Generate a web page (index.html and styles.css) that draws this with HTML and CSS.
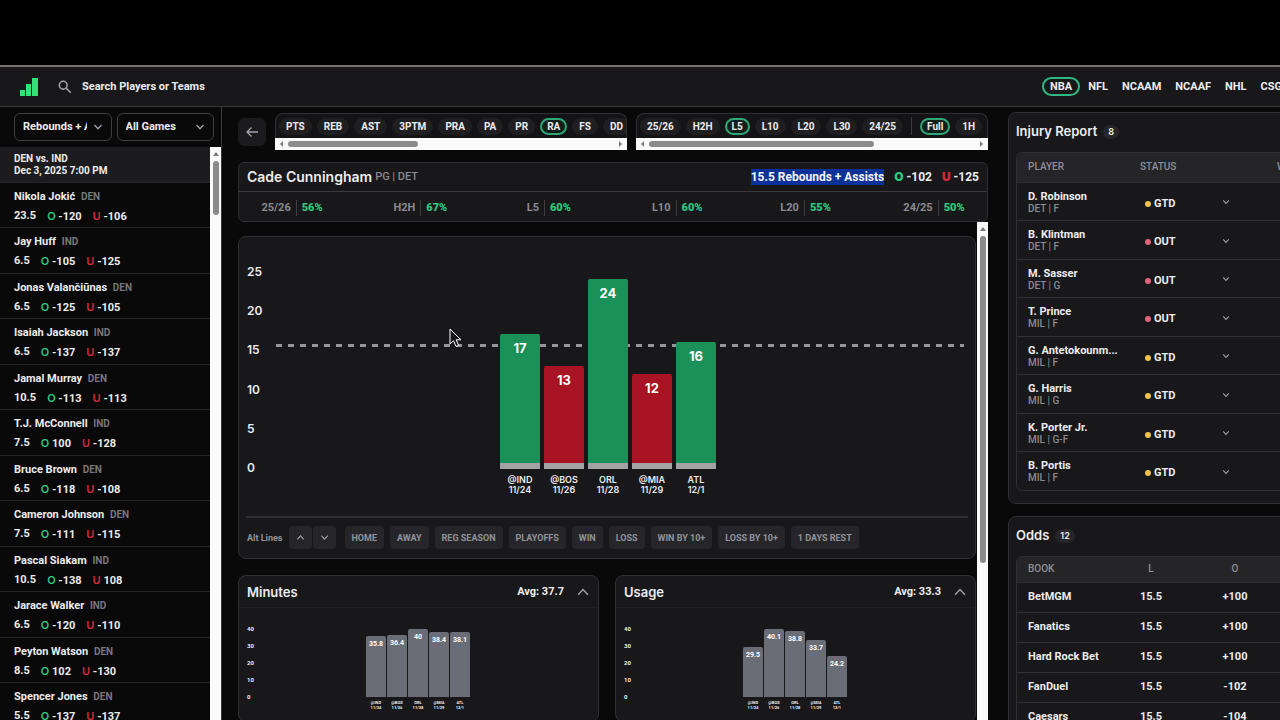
FILE: index.html
```
<!DOCTYPE html>
<html lang="en">

<head>
    <meta charset="UTF-8">
    <meta name="viewport" content="width=device-width, initial-scale=1.0">
    <title>Cade Cunningham - Rebounds + Assists</title>
    <link rel="stylesheet" href="styles.css">
</head>

<body>
    <!-- shared icons -->
    <svg class="defs" width="0" height="0">
        <symbol id="down" viewBox="0 0 10 10"><path d="M1.5 3 5 6.8 8.5 3" /></symbol>
        <symbol id="up" viewBox="0 0 10 10"><path d="M1.5 7 5 3.2 8.5 7" /></symbol>
    </svg>

    <header class="topbar">
        <a class="logo" href="#" aria-label="Home">
            <svg width="18" height="18" viewBox="0 0 18 18"><path d="M0 12h5v6H0zM6 6h5v12H6zM12 0h6v18h-6z" /></svg>
        </a>
        <label class="search">
            <svg width="14" height="14" viewBox="0 0 14 14"><circle cx="5.2" cy="5.2" r="3.9" /><path d="m8.2 8.2 4.6 4.6" /></svg>
            <input type="text" placeholder="Search Players or Teams" aria-label="Search Players or Teams">
        </label>
        <nav class="leagues">
            <a class="active" href="#">NBA</a>
            <a href="#">NFL</a>
            <a href="#">NCAAM</a>
            <a href="#">NCAAF</a>
            <a href="#">NHL</a>
            <a href="#">CSGO</a>
        </nav>
    </header>

    <div class="layout">
        <aside class="sidebar">
            <div class="selects">
                <div class="select">
                    <select aria-label="Prop"><option>Rebounds + Assists</option></select>
                    <svg width="10" height="10"><use href="#down" /></svg>
                </div>
                <div class="select">
                    <select aria-label="Games"><option>All Games</option></select>
                    <svg width="10" height="10"><use href="#down" /></svg>
                </div>
            </div>
            <div class="scroller">
                <div class="list">
                    <div class="game">DEN vs. IND<br>Dec 3, 2025 7:00 PM</div>
                    <ul>
                        <li><p>Nikola Jokić <i>DEN</i></p><p class="line">23.5 <span><b class="o">O</b> -120</span> <span><b class="u">U</b> -106</span></p></li>
                        <li><p>Jay Huff <i>IND</i></p><p class="line">6.5 <span><b class="o">O</b> -105</span> <span><b class="u">U</b> -125</span></p></li>
                        <li><p>Jonas Valančiūnas <i>DEN</i></p><p class="line">6.5 <span><b class="o">O</b> -125</span> <span><b class="u">U</b> -105</span></p></li>
                        <li><p>Isaiah Jackson <i>IND</i></p><p class="line">6.5 <span><b class="o">O</b> -137</span> <span><b class="u">U</b> -137</span></p></li>
                        <li><p>Jamal Murray <i>DEN</i></p><p class="line">10.5 <span><b class="o">O</b> -113</span> <span><b class="u">U</b> -113</span></p></li>
                        <li><p>T.J. McConnell <i>IND</i></p><p class="line">7.5 <span><b class="o">O</b> 100</span> <span><b class="u">U</b> -128</span></p></li>
                        <li><p>Bruce Brown <i>DEN</i></p><p class="line">6.5 <span><b class="o">O</b> -118</span> <span><b class="u">U</b> -108</span></p></li>
                        <li><p>Cameron Johnson <i>DEN</i></p><p class="line">7.5 <span><b class="o">O</b> -111</span> <span><b class="u">U</b> -115</span></p></li>
                        <li><p>Pascal Siakam <i>IND</i></p><p class="line">10.5 <span><b class="o">O</b> -138</span> <span><b class="u">U</b> 108</span></p></li>
                        <li><p>Jarace Walker <i>IND</i></p><p class="line">6.5 <span><b class="o">O</b> -120</span> <span><b class="u">U</b> -110</span></p></li>
                        <li><p>Peyton Watson <i>DEN</i></p><p class="line">8.5 <span><b class="o">O</b> 102</span> <span><b class="u">U</b> -130</span></p></li>
                        <li><p>Spencer Jones <i>DEN</i></p><p class="line">5.5 <span><b class="o">O</b> -137</span> <span><b class="u">U</b> -137</span></p></li>
                    </ul>
                </div>
                <div class="vbar"><span class="arrow-up"></span><span class="thumb short"></span></div>
            </div>
        </aside>

        <main class="center">
            <div class="filters">
                <button class="back" aria-label="Back">
                    <svg width="14" height="14" viewBox="0 0 14 14"><path d="M13 7H2M6.5 2.5 2 7l4.500 4.500" /></svg>
                </button>
                <div class="pillbox">
                    <div class="pills">
                        <button>PTS</button>
                        <button>REB</button>
                        <button>AST</button>
                        <button>3PTM</button>
                        <button>PRA</button>
                        <button>PA</button>
                        <button>PR</button>
                        <button class="active">RA</button>
                        <button>FS</button>
                        <button>DD</button>
                    </div>
                    <div class="hbar"><span class="arrow-left"></span><span class="track"><span class="thumb"></span></span><span class="arrow-right"></span></div>
                </div>
                <div class="pillbox">
                    <div class="pills">
                        <button>25/26</button>
                        <button>H2H</button>
                        <button class="active">L5</button>
                        <button>L10</button>
                        <button>L20</button>
                        <button>L30</button>
                        <button>24/25</button>
                        <span class="sep"></span>
                        <button class="active">Full</button>
                        <button>1H</button>
                    </div>
                    <div class="hbar"><span class="arrow-left"></span><span class="track"><span class="thumb long"></span></span><span class="arrow-right"></span></div>
                </div>
            </div>

            <section class="player">
                <div class="player-top">
                    <h1>Cade Cunningham</h1>
                    <span class="team">PG | DET</span>
                    <mark>15.5 Rebounds + Assists</mark>
                    <span class="price"><b class="o">O</b> -102</span>
                    <span class="price"><b class="u">U</b> -125</span>
                </div>
                <div class="rates">
                    <div>25/26<b>56%</b></div>
                    <div>H2H<b>67%</b></div>
                    <div>L5<b>60%</b></div>
                    <div>L10<b>60%</b></div>
                    <div>L20<b>55%</b></div>
                    <div>24/25<b>50%</b></div>
                </div>
            </section>

            <div class="scroller">
                <div class="content">
                    <section class="card main-card">
                        <div class="chart big">
                            <div class="axis"><span>25</span><span>20</span><span>15</span><span>10</span><span>5</span><span>0</span></div>
                            <div class="plot">
                                <div class="prop-line" style="bottom: 61.5%"></div>
                                <div class="col"><div class="bar win" style="height: 68%">17</div><p>@IND<br>11/24</p></div>
                                <div class="col"><div class="bar lose" style="height: 52%">13</div><p>@BOS<br>11/26</p></div>
                                <div class="col"><div class="bar win" style="height: 96%">24</div><p>ORL<br>11/28</p></div>
                                <div class="col"><div class="bar lose" style="height: 48%">12</div><p>@MIA<br>11/29</p></div>
                                <div class="col"><div class="bar win" style="height: 64%">16</div><p>ATL<br>12/1</p></div>
                            </div>
                        </div>
                        <div class="tags">
                            <span>Alt Lines</span>
                            <div class="steps">
                                <button aria-label="Line up"><svg width="9" height="9"><use href="#up" /></svg></button>
                                <button aria-label="Line down"><svg width="9" height="9"><use href="#down" /></svg></button>
                            </div>
                            <button>HOME</button>
                            <button>AWAY</button>
                            <button>REG SEASON</button>
                            <button>PLAYOFFS</button>
                            <button>WIN</button>
                            <button>LOSS</button>
                            <button>WIN BY 10+</button>
                            <button>LOSS BY 10+</button>
                            <button>1 DAYS REST</button>
                        </div>
                    </section>

                    <div class="pair">
                        <section class="card">
                            <div class="card-head">
                                <h2>Minutes</h2>
                                <span>Avg: 37.7</span>
                                <button aria-label="Collapse"><svg width="14" height="14"><use href="#up" /></svg></button>
                            </div>
                            <div class="chart small">
                                <div class="axis"><span>40</span><span>30</span><span>20</span><span>10</span><span>0</span></div>
                                <div class="plot">
                                    <div class="col"><div class="bar" style="height: 89.5%">35.8</div><p>@IND<br>11/24</p></div>
                                    <div class="col"><div class="bar" style="height: 91%">36.4</div><p>@BOS<br>11/26</p></div>
                                    <div class="col"><div class="bar" style="height: 100%">40</div><p>ORL<br>11/28</p></div>
                                    <div class="col"><div class="bar" style="height: 96%">38.4</div><p>@MIA<br>11/29</p></div>
                                    <div class="col"><div class="bar" style="height: 95.2%">38.1</div><p>ATL<br>12/1</p></div>
                                </div>
                            </div>
                        </section>
                        <section class="card">
                            <div class="card-head">
                                <h2>Usage</h2>
                                <span>Avg: 33.3</span>
                                <button aria-label="Collapse"><svg width="14" height="14"><use href="#up" /></svg></button>
                            </div>
                            <div class="chart small">
                                <div class="axis"><span>40</span><span>30</span><span>20</span><span>10</span><span>0</span></div>
                                <div class="plot">
                                    <div class="col"><div class="bar" style="height: 73.8%">29.5</div><p>@IND<br>11/24</p></div>
                                    <div class="col"><div class="bar" style="height: 100.2%">40.1</div><p>@BOS<br>11/26</p></div>
                                    <div class="col"><div class="bar" style="height: 97%">38.8</div><p>ORL<br>11/28</p></div>
                                    <div class="col"><div class="bar" style="height: 84.2%">33.7</div><p>@MIA<br>11/29</p></div>
                                    <div class="col"><div class="bar" style="height: 60.5%">24.2</div><p>ATL<br>12/1</p></div>
                                </div>
                            </div>
                        </section>
                    </div>
                </div>
                <div class="vbar"><span class="arrow-up"></span><span class="thumb tall"></span></div>
            </div>
        </main>

        <aside class="right">
            <section class="panel">
                <h2>Injury Report <span class="count">8</span></h2>
                <div class="table-wrap">
                    <table class="injuries">
                        <thead><tr><th>PLAYER</th><th>STATUS</th><th></th><th>WITHOUT</th></tr></thead>
                        <tbody>
                            <tr><td>D. Robinson<small>DET | F</small></td><td><i class="dot gtd"></i>GTD</td><td><svg width="8" height="8"><use href="#down" /></svg></td><td></td></tr>
                            <tr><td>B. Klintman<small>DET | F</small></td><td><i class="dot out"></i>OUT</td><td><svg width="8" height="8"><use href="#down" /></svg></td><td></td></tr>
                            <tr><td>M. Sasser<small>DET | G</small></td><td><i class="dot out"></i>OUT</td><td><svg width="8" height="8"><use href="#down" /></svg></td><td></td></tr>
                            <tr><td>T. Prince<small>MIL | F</small></td><td><i class="dot out"></i>OUT</td><td><svg width="8" height="8"><use href="#down" /></svg></td><td></td></tr>
                            <tr><td>G. Antetokounm...<small>MIL | F</small></td><td><i class="dot gtd"></i>GTD</td><td><svg width="8" height="8"><use href="#down" /></svg></td><td></td></tr>
                            <tr><td>G. Harris<small>MIL | G</small></td><td><i class="dot gtd"></i>GTD</td><td><svg width="8" height="8"><use href="#down" /></svg></td><td></td></tr>
                            <tr><td>K. Porter Jr.<small>MIL | G-F</small></td><td><i class="dot gtd"></i>GTD</td><td><svg width="8" height="8"><use href="#down" /></svg></td><td></td></tr>
                            <tr><td>B. Portis<small>MIL | F</small></td><td><i class="dot gtd"></i>GTD</td><td><svg width="8" height="8"><use href="#down" /></svg></td><td></td></tr>
                        </tbody>
                    </table>
                </div>
            </section>

            <section class="panel">
                <h2>Odds <span class="count">12</span></h2>
                <div class="table-wrap">
                    <table class="odds">
                        <thead><tr><th>BOOK</th><th>L</th><th>O</th><th>U</th></tr></thead>
                        <tbody>
                            <tr><td>BetMGM</td><td>15.5</td><td>+100</td><td></td></tr>
                            <tr><td>Fanatics</td><td>15.5</td><td>+100</td><td></td></tr>
                            <tr><td>Hard Rock Bet</td><td>15.5</td><td>+100</td><td></td></tr>
                            <tr><td>FanDuel</td><td>15.5</td><td>-102</td><td></td></tr>
                            <tr><td>Caesars</td><td>15.5</td><td>-104</td><td></td></tr>
                        </tbody>
                    </table>
                </div>
            </section>
        </aside>
    </div>

    <svg class="cursor" width="14" height="20" viewBox="0 0 14 20"><path d="M1 1v15l3.500-3.200 2.600 5.700 2.600-1.200-2.600-5.500H12z" /></svg>
</body>

</html>
```
FILE: styles.css
```
* {
    margin: 0;
    padding: 0;
    box-sizing: border-box;
}

body {
    height: 100vh;
    padding-top: 65px;
    display: flex;
    flex-direction: column;
    overflow: hidden;
    background: #000;
    color: #ececee;
    font: 700 11px/16px Roboto, "Liberation Sans", sans-serif;
}

ul {
    list-style: none;
}

a {
    color: inherit;
    text-decoration: none;
}

button,
input,
select {
    font: inherit;
    color: inherit;
    background: none;
    border: 0;
    outline: 0;
}

button {
    cursor: pointer;
}

svg {
    display: block;
    fill: none;
    stroke: #a1a1aa;
    stroke-width: 1.3;
}

i {
    font-style: normal;
}

h1,
h2,
.o,
.u,
.big {
    font-family: Inter, "Liberation Sans", sans-serif;
}

.defs {
    position: absolute;
}

.o {
    color: #2fc77f;
}

.u {
    color: #cf2a40;
}

/* top bar */
.topbar {
    flex: none;
    display: flex;
    align-items: center;
    height: 42px;
    padding-left: 20px;
    background: #18181b;
    border-top: 2px solid #77736f;
    border-bottom: 1px solid #3a3a3d;
}

.logo svg {
    fill: #34e27a;
    stroke: none;
}

.search {
    flex: 1;
    display: flex;
    align-items: center;
    gap: 10px;
    margin-left: 20px;
}

.search svg {
    stroke-width: 1.6;
}

.search input {
    flex: 1;
}

.search input::placeholder {
    color: #ececee;
}

.leagues {
    flex: none;
    display: flex;
    align-items: center;
    gap: 14px;
    width: 238px;
    overflow: hidden;
}

.leagues .active {
    padding: 0 6px;
    margin-right: -6px;
    border: 2px solid #2fb982;
    border-radius: 10px;
    line-height: 15px;
}

/* three columns */
.layout {
    flex: 1;
    min-height: 0;
    display: grid;
    grid-template-columns: 222px minmax(0, 1fr) 272px;
    background: #09090a;
}

.sidebar,
.center {
    display: flex;
    flex-direction: column;
    min-height: 0;
}

.sidebar {
    border-right: 1px solid #3a3a3d;
}

.selects {
    display: flex;
    gap: 5px;
    padding: 6px 7px 6px 14px;
}

.select {
    flex: 1;
    min-width: 0;
    display: grid;
    align-items: center;
    height: 28px;
    border: 1px solid #3f3f43;
    border-radius: 6px;
}

.select select,
.select svg {
    grid-area: 1 / 1;
}

.select select {
    appearance: none;
    width: 100%;
    padding: 0 24px 0 8px;
}

.select svg {
    justify-self: end;
    margin-right: 8px;
    pointer-events: none;
}

.scroller {
    flex: 1;
    min-height: 0;
    display: flex;
}

.list {
    flex: 1;
    overflow: hidden;
}

.game {
    padding: 6px 14px 5px;
    background: #1c1c1e;
    font-size: 10px;
    line-height: 12px;
}

.list li {
    padding: 6px 14px 4px;
    border-top: 1px solid #26262a;
}

.list li:nth-child(odd) {
    padding-bottom: 3px;
}

.list i {
    margin-left: 3px;
    color: #77777d;
    font-size: 10px;
}

.line {
    display: flex;
    align-items: center;
    gap: 11px;
    height: 16px;
    margin-top: 3px;
}

.line b {
    font-weight: 600;
}

/* scrollbars */
.vbar {
    flex: none;
    display: flex;
    flex-direction: column;
    align-items: center;
    gap: 5px;
    width: 11px;
    padding-top: 5px;
    background: #fafafa;
}

.hbar {
    display: flex;
    align-items: center;
    gap: 5px;
    height: 12px;
    padding: 0 5px;
    background: #fafafa;
}

.track {
    flex: 1;
}

.thumb {
    display: block;
    border-radius: 3px;
    background: #8b8b8b;
}

.vbar .thumb {
    width: 6px;
}

.hbar .thumb {
    width: 40%;
    height: 6px;
}

.hbar .long {
    width: 69%;
}

.short {
    height: 54px;
}

.tall {
    height: 327px;
}

.arrow-up,
.arrow-left,
.arrow-right {
    border: 3px solid transparent;
}

.arrow-up {
    border-top: 0;
    border-bottom: 4px solid #7a7a7a;
}

.arrow-left {
    border-left: 0;
    border-right-color: #7a7a7a;
}

.arrow-right {
    border-right: 0;
    border-left-color: #7a7a7a;
}

/* center */
.center {
    padding: 6px 20px 0 16px;
}

.filters {
    display: flex;
    gap: 9px;
    font-size: 10px;
}

.back {
    flex: none;
    align-self: center;
    display: grid;
    place-items: center;
    width: 28px;
    height: 28px;
    border-radius: 6px;
    background: #1b1b1d;
}

.pillbox {
    flex: 1;
    min-width: 0;
}

.pills {
    display: flex;
    align-items: center;
    gap: 5px;
    height: 25px;
    padding: 0 3px;
    overflow: hidden;
    background: #141416;
    border: 1px solid #303033;
    border-bottom: 0;
    border-radius: 8px 8px 0 0;
}

.pills button {
    flex: none;
    height: 17px;
    padding: 0 7px;
    border-radius: 9px;
    background: #1f1f22;
    line-height: 17px;
}

.pills .active {
    padding: 0 5px;
    border: 2px solid #2fa676;
    background: #12201b;
    line-height: 13px;
}

.sep {
    flex: none;
    width: 1px;
    height: 18px;
    margin: 0 3px;
    background: #3a3a3d;
}

.player {
    margin-top: 12px;
    background: #18181b;
    border: 1px solid #303033;
    border-radius: 6px;
}

.player-top {
    display: flex;
    align-items: center;
    height: 29px;
    padding: 0 8px;
    border-bottom: 1px solid #3a3a3d;
    font-size: 12px;
}

h1 {
    font-size: 14px;
    font-weight: 600;
}

.team {
    margin: 0 auto 0 3px;
    color: #8a8a90;
    font-size: 11px;
    font-weight: 500;
}

mark {
    background: #0c3199;
    color: #f4f4f5;
}

.price {
    margin-left: 10px;
}

.rates {
    display: flex;
    justify-content: space-between;
    padding: 8px 20px 5px;
    color: #8a8a90;
}

.rates div {
    display: flex;
    justify-content: center;
    width: 66px;
}

.rates b {
    margin-left: 5px;
    padding-left: 5px;
    border-left: 1px solid #3f3f43;
    color: #2fc77f;
}

.content {
    flex: 1;
    min-width: 0;
    margin-right: 1px;
    padding-top: 14px;
    overflow: hidden;
}

.card,
.panel {
    background: #18181b;
    border: 1px solid #303033;
    border-radius: 8px;
}

.main-card {
    padding: 0 7px 9px;
}

/* charts */
.chart {
    display: flex;
}

.axis {
    display: flex;
    flex-direction: column;
    justify-content: space-between;
    line-height: 10px;
}

.plot {
    position: relative;
    flex: 1;
    display: flex;
    justify-content: center;
    align-items: flex-end;
}

.col {
    position: relative;
    height: 100%;
    display: flex;
    flex-direction: column;
    justify-content: flex-end;
}

/* game labels hang under the baseline */
.col p {
    position: absolute;
    top: 100%;
    width: 100%;
    text-align: center;
}

.bar {
    border-radius: 2px 2px 0 0;
    background: #6b6d76;
    color: #fff;
    text-align: center;
}

.big {
    padding: 34px 4px 47px 1px;
    font-size: 12px;
    font-weight: 600;
}

.big .axis {
    width: 29px;
    margin: -4px 0;
}

.big .plot {
    height: 198px;
    padding-right: 24px;
    gap: 4px;
}

.big .bar {
    width: 40px;
    padding-top: 6px;
    border-bottom: 6px solid #a3a3a3;
    font-size: 13px;
    font-weight: 700;
}

.big .win {
    background-color: #1a9159;
}

.big .lose {
    background-color: #a81424;
}

.big p {
    padding-top: 6px;
    font-size: 9px;
    line-height: 10px;
}

.prop-line {
    position: absolute;
    left: 0;
    right: 0;
    height: 3px;
    background: repeating-linear-gradient(90deg, #96969a 0 6px, transparent 6px 12px);
}

.tags {
    display: flex;
    align-items: center;
    gap: 6px;
    padding: 8px 1px 0;
    border-top: 2px solid #303033;
    color: #929298;
    font-size: 9px;
}

.tags button {
    height: 23px;
    padding: 0 7px;
    border-radius: 4px;
    background: #26262a;
}

.steps {
    display: flex;
    gap: 1px;
    margin-right: 3px;
}

.small {
    padding: 21px 8px 24px;
    font-size: 6px;
}

.small .axis {
    margin: -5px 0;
}

.small .plot {
    height: 68px;
    gap: 1px;
    padding-right: 8px;
}

.small .bar {
    width: 20px;
    font-size: 7px;
    line-height: 16px;
}

.small p {
    padding-top: 3px;
    font-size: 4px;
    line-height: 5px;
}

.pair {
    display: grid;
    grid-template-columns: 1fr 1fr;
    gap: 16px;
    margin-top: 16px;
}

.card-head {
    display: flex;
    align-items: center;
    gap: 12px;
    height: 32px;
    padding: 0 8px;
    border-bottom: 1px solid #202023;
}

.card-head svg {
    stroke-width: 1;
}

h2 {
    font-size: 13px;
    font-weight: 600;
}

.card-head h2 {
    flex: 1;
}

/* right column, runs past the window edge */
.right {
    padding-top: 5px;
    overflow: hidden;
}

.panel {
    width: 480px;
    margin-bottom: 12px;
    padding: 10px 7px 12px;
}

.panel h2 {
    display: flex;
    align-items: center;
    gap: 6px;
    line-height: 17px;
}

.count {
    padding: 0 5px;
    border-radius: 8px;
    background: #26262a;
    font-size: 9px;
    line-height: 14px;
}

.table-wrap {
    margin-top: 12px;
    border: 1px solid #303033;
    border-radius: 6px;
    overflow: hidden;
}

table {
    width: 100%;
    table-layout: fixed;
    border-collapse: collapse;
}

th {
    height: 29px;
    background: #252528;
    color: #8f8f95;
    font-size: 10px;
    font-weight: 500;
    text-align: left;
}

th:first-child,
td:first-child {
    width: 111px;
    padding-left: 11px;
}

td {
    border-top: 1px solid #303033;
}

small {
    display: block;
    color: #8a8a90;
    font-size: 10px;
    font-weight: 500;
    line-height: 12px;
}

.injuries td {
    height: 38px;
    padding-top: 2px;
    line-height: 13px;
}

.injuries tr:nth-child(even) td {
    height: 39px;
}

.injuries th:nth-child(2) {
    width: 94px;
    padding-left: 12px;
}

.injuries td:nth-child(2) {
    padding-top: 4px;
    padding-left: 17px;
}

.injuries th:nth-child(3) {
    width: 55px;
}

.dot {
    display: inline-block;
    width: 6px;
    height: 6px;
    margin-right: 3px;
    border-radius: 50%;
}

.gtd {
    background: #eec24b;
}

.out {
    background: #e0647c;
}

.odds th {
    height: 25px;
}

.odds td {
    height: 30px;
}

.odds th:nth-child(n + 2),
.odds td:nth-child(n + 2) {
    text-align: center;
}

.odds th:nth-child(2) {
    width: 46px;
}

.odds th:nth-child(3) {
    width: 122px;
}

.cursor {
    position: absolute;
    left: 449px;
    top: 328px;
    fill: #18181b;
    stroke: #fff;
    stroke-width: 1;
}
```
